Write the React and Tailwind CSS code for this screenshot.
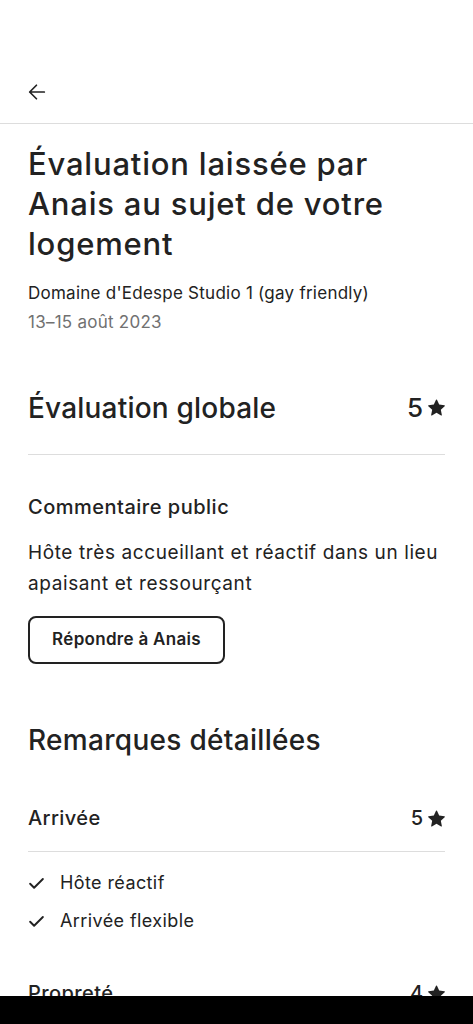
import React from "react";

const Star = ({ size = 18 }) => (
  <svg width={size} height={size} viewBox="0 0 32 32" fill="#222">
    <path d="M15.1 1.58l-4.13 8.88-9.86 1.27a1 1 0 0 0-.54 1.74l7.3 6.57-1.97 9.85a1 1 0 0 0 1.48 1.06l8.62-5 8.63 5a1 1 0 0 0 1.48-1.06l-1.97-9.85 7.3-6.57a1 1 0 0 0-.55-1.73l-9.86-1.28-4.12-8.88a1 1 0 0 0-1.82 0z" />
  </svg>
);

const Check = () => (
  <svg width="17" height="17" viewBox="0 0 32 32" fill="none" stroke="#222" strokeWidth="3.6" strokeLinecap="round" strokeLinejoin="round">
    <path d="M4 16.5l7.5 7.5L28 7.5" />
  </svg>
);

export default function App() {
  return (
    <div className="h-screen flex flex-col bg-white text-[#222] overflow-hidden" style={{ fontFamily: "Inter, 'Noto Sans', sans-serif" }}>
      <div className="flex-1 overflow-hidden">
        <div className="h-[124px] flex items-end pb-[22px] px-[28px] border-b border-[#dddddd]">
          <svg width="18" height="18" viewBox="0 0 32 32" fill="none" stroke="#222" strokeWidth="3" strokeLinecap="round" strokeLinejoin="round">
            <path d="M29 16H3M15 4L3 16l12 12" />
          </svg>
        </div>
        <div className="px-[28px]">
          <h1 className="mt-[20px] text-[31px] leading-[40px] font-medium tracking-[0.8px]">
            Évaluation laissée par Anais au sujet de votre logement
          </h1>
          <div className="mt-[15px] text-[17px] leading-[29px] tracking-[0.25px]">Domaine d'Edespe Studio 1 (gay friendly)</div>
          <div className="text-[17px] leading-[29px] tracking-[0.25px] text-[#717171]">13–15 août 2023</div>

          <div className="mt-[51px] flex items-center justify-between">
            <div className="text-[28px] leading-[34px] font-medium tracking-[0.2px]">Évaluation globale</div>
            <div className="flex items-center gap-[5px] text-[26px] font-medium">
              5 <Star size={17} />
            </div>
          </div>
          <div className="mt-[27px] border-b border-[#dddddd]" />

          <div className="mt-[38px] text-[20px] leading-[28px] font-medium tracking-[0.5px]">Commentaire public</div>
          <div className="mt-[16px] text-[19px] leading-[31px] tracking-[0.6px]">
            Hôte très accueillant et réactif dans un lieu apaisant et ressourçant
          </div>
          <button className="mt-[17px] h-[48px] w-[197px] border-2 border-[#222] rounded-[8px] text-[17px] font-semibold tracking-[0.3px]">
            Répondre à Anais
          </button>

          <div className="mt-[59px] text-[28px] leading-[34px] font-medium tracking-[0.3px]">Remarques détaillées</div>

          <div className="mt-[46px] flex items-center justify-between">
            <div className="text-[20px] leading-[28px] font-medium tracking-[0.4px]">Arrivée</div>
            <div className="flex items-center gap-[5px] text-[20px] font-medium">
              5 <Star size={17} />
            </div>
          </div>
          <div className="mt-[18px] border-b border-[#dddddd]" />
          <div className="mt-[17px] flex flex-col gap-[10px]">
            <div className="flex items-center gap-[15px] text-[18px] leading-[28px] tracking-[0.4px]">
              <Check /> Hôte réactif
            </div>
            <div className="flex items-center gap-[15px] text-[18px] leading-[28px] tracking-[0.4px]">
              <Check /> Arrivée flexible
            </div>
          </div>
          <div className="mt-[43px] flex items-center justify-between">
            <div className="text-[20px] leading-[28px] font-medium tracking-[0.4px]">Propreté</div>
            <div className="flex items-center gap-[5px] text-[20px] font-medium">
              4 <Star size={17} />
            </div>
          </div>
        </div>
      </div>
      <div className="h-[28px] bg-black shrink-0" />
    </div>
  );
}
